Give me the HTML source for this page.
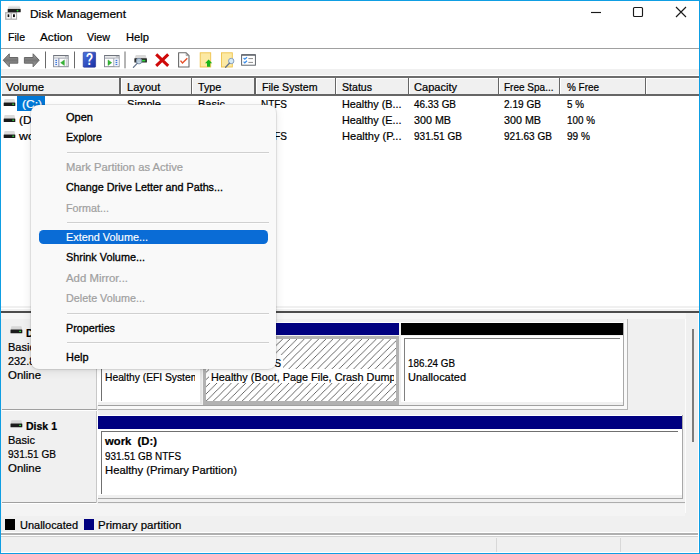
<!DOCTYPE html>
<html lang="en">
<head>
<meta charset="utf-8">
<title>Disk Management</title>
<style>
html,body{margin:0;padding:0;}
body{width:700px;height:554px;overflow:hidden;background:#fff;font-family:"Liberation Sans",sans-serif;font-size:11.6px;color:#000;}
#win{position:absolute;left:0;top:0;width:700px;height:554px;overflow:hidden;background:#fff;}
.a{position:absolute;}
.t{position:absolute;white-space:nowrap;line-height:14px;height:14px;transform-origin:0 50%;display:block;-webkit-text-stroke:0.22px currentColor;}
.b{font-weight:bold;}
.dis{color:#a0a0a0;}
.m{-webkit-text-stroke:0.32px currentColor;}
.hsep{position:absolute;top:78px;width:1.2px;height:16px;background:#666;}
.hsep:after{content:"";position:absolute;left:1.2px;top:0;width:1px;height:16px;background:#fff;}
.msep{position:absolute;left:67px;width:202px;height:1px;background:#d0d0d0;box-shadow:0 1px 0 #fdfdfd;}
svg{position:absolute;overflow:visible;}
</style>
</head>
<body>
<div id="win">
<!-- title bar -->
<div class="a" id="titlebar" style="left:1px;top:1px;width:698px;height:28px;background:#fff;"></div>
<!-- menu bar line -->
<div class="a" style="left:1px;top:48px;width:698px;height:1px;background:#a0a0a0;"></div>
<!-- toolbar bottom gap -->
<div class="a" style="left:1px;top:69px;width:698px;height:8px;background:#f0f0f0;"></div>
<div class="a" style="left:1px;top:75px;width:698px;height:1px;background:#fff;"></div>
<!-- list header -->
<div class="a" style="left:1px;top:76px;width:698px;height:2px;background:#6d6d6d;"></div>
<div class="a" style="left:2px;top:78px;width:697px;height:16px;background:#f0f0f0;"></div>
<div class="a" style="left:2px;top:78.2px;width:697px;height:1px;background:#fff;"></div>
<div class="a" style="left:2px;top:94.4px;width:697px;height:1.5px;background:#666;"></div>
<div class="hsep" style="left:119.4px"></div>
<div class="hsep" style="left:190.8px"></div>
<div class="hsep" style="left:254.4px"></div>
<div class="hsep" style="left:335.1px"></div>
<div class="hsep" style="left:407.7px"></div>
<div class="hsep" style="left:497.6px"></div>
<div class="hsep" style="left:559.0px"></div>
<div class="hsep" style="left:644.5px"></div>
<!-- selection -->
<div class="a" style="left:17px;top:95.8px;width:28px;height:15.4px;background:#0078d7;"></div>
<!-- splitter -->
<div class="a" style="left:1px;top:306px;width:698px;height:6px;background:#f0f0f0;"></div>
<div class="a" style="left:1px;top:308px;width:698px;height:1px;background:#fff;"></div>
<div class="a" style="left:1px;top:311.3px;width:698px;height:1.5px;background:#4c4c4c;"></div>
<!-- lower pane -->
<div class="a" id="lower" style="left:1px;top:313px;width:698px;height:239px;background:#f0f0f0;"></div>
<!-- ===== lower pane graphics ===== -->
<div class="a" style="left:685px;top:313px;width:1px;height:200px;background:#fcfcfc;"></div>
<div class="a" style="left:692.4px;top:329px;width:1.8px;height:113px;background:#7c7c7c;"></div>
<div class="a" style="left:1px;top:313px;width:685px;height:6px;background:#f6f6f6;"></div>
<!-- disk 0 label panel -->
<div class="a" style="left:2px;top:409px;width:95px;height:1px;background:#a0a0a0;"></div>
<div class="a" style="left:2px;top:410px;width:95px;height:1px;background:#fff;"></div>
<div class="a" style="left:96px;top:313px;width:1px;height:96px;background:#c8c8c8;"></div>
<div class="a" style="left:97px;top:313px;width:1px;height:92px;background:#fff;"></div>
<!-- disk 0 frame lines -->
<div class="a" style="left:98px;top:405.2px;width:526px;height:1px;background:#a0a0a0;"></div>
<div class="a" style="left:98px;top:409px;width:530px;height:1px;background:#b4b4b4;"></div>
<div class="a" style="left:623px;top:323px;width:1px;height:83px;background:#a8a8a8;"></div>
<div class="a" style="left:627px;top:319px;width:1px;height:91px;background:#b4b4b4;"></div>
<div class="a" style="left:98px;top:322px;width:525px;height:1px;background:#fff;"></div>
<div class="a" style="left:624px;top:320px;width:3px;height:89px;background:#f9f9f9;"></div>
<div class="a" style="left:98px;top:406px;width:529px;height:3px;background:#f9f9f9;"></div>
<!-- disk 0 bars -->
<div class="a" style="left:98px;top:323.2px;width:101px;height:12.3px;background:#000080;"></div>
<div class="a" style="left:202px;top:323.2px;width:196.5px;height:12.3px;background:#000080;"></div>
<div class="a" style="left:401px;top:323.2px;width:221.5px;height:12.3px;background:#000;"></div>
<!-- EFI box -->
<div class="a" style="left:98px;top:335.5px;width:101.7px;height:66.5px;background:#fff;"></div>
<div class="a" style="left:100.7px;top:338.3px;width:96.5px;height:1px;background:#707070;"></div>
<div class="a" style="left:100.7px;top:338.3px;width:1px;height:62.5px;background:#707070;"></div>
<div class="a" style="left:199.7px;top:336px;width:2.6px;height:68px;background:#e6e6e6;"></div>
<!-- hatched box -->
<div class="a" style="left:202.5px;top:335.5px;width:196.5px;height:69px;background:#b2b2b2;"></div>
<svg style="left:206px;top:338.5px;" width="189.5" height="62.5" viewBox="0 0 189.5 62.5">
<defs><pattern id="hatch" width="7.2" height="7.2" patternUnits="userSpaceOnUse" x="4.65" y="0">
<rect width="7.2" height="7.2" fill="#fff"/>
<path d="M-1,8.2 L8.2,-1 M-1,1 L1,-1 M6.2,8.2 L8.2,6.2" stroke="#585858" stroke-width="0.9" fill="none"/>
</pattern></defs>
<rect width="190" height="62" fill="url(#hatch)"/>
</svg>
<div class="a" style="left:209px;top:355px;width:74px;height:14px;background:#fff;"></div>
<div class="a" style="left:209px;top:369px;width:187px;height:14px;background:#fff;"></div>
<!-- unallocated box -->
<div class="a" style="left:401px;top:335.5px;width:221.5px;height:66.8px;background:#fff;"></div>
<div class="a" style="left:404px;top:338.3px;width:215.5px;height:1px;background:#808080;"></div>
<div class="a" style="left:404px;top:338.3px;width:1px;height:62.7px;background:#808080;"></div>
<!-- disk 1 label panel -->
<div class="a" style="left:2px;top:502px;width:95px;height:1px;background:#a0a0a0;"></div>
<div class="a" style="left:2px;top:503px;width:95px;height:1px;background:#fff;"></div>
<div class="a" style="left:96px;top:411px;width:1px;height:92px;background:#c8c8c8;"></div>
<div class="a" style="left:97px;top:411px;width:1px;height:88px;background:#fff;"></div>
<!-- disk 1 frame -->
<div class="a" style="left:98px;top:415px;width:584px;height:1px;background:#fff;"></div>
<div class="a" style="left:98px;top:498px;width:585px;height:1px;background:#a8a8a8;"></div>
<div class="a" style="left:98px;top:501.5px;width:587px;height:1.3px;background:#adadad;"></div>
<div class="a" style="left:682px;top:415px;width:1px;height:84px;background:#a8a8a8;"></div>
<div class="a" style="left:98px;top:416px;width:583.5px;height:12.5px;background:#000080;"></div>
<div class="a" style="left:98px;top:428.5px;width:583.5px;height:66.3px;background:#fff;"></div>
<div class="a" style="left:100.7px;top:431.2px;width:577.5px;height:1px;background:#707070;"></div>
<div class="a" style="left:100.7px;top:431.2px;width:1px;height:62.8px;background:#707070;"></div>
<!-- legend -->
<div class="a" style="left:2px;top:503.5px;width:683px;height:12.5px;background:#f4f4f4;"></div>
<div class="a" style="left:5.4px;top:519.2px;width:9.6px;height:11px;background:#000;"></div>
<div class="a" style="left:84px;top:519.2px;width:10px;height:11px;background:#000080;"></div>
<!-- status bar -->
<div class="a" style="left:1px;top:532px;width:698px;height:1px;background:#fff;"></div>
<div class="a" style="left:1px;top:533px;width:698px;height:2px;background:#b0b0b0;"></div>
<div class="a" style="left:1px;top:535px;width:698px;height:1px;background:#fff;"></div>
<div class="a" style="left:1px;top:536px;width:698px;height:1px;background:#d2d2d2;"></div>
<div class="a" style="left:1px;top:552px;width:698px;height:1px;background:#fff;"></div>
<div class="a" style="left:698px;top:313px;width:1px;height:240px;background:#fff;"></div>
<div class="a" style="left:496px;top:538px;width:1px;height:14px;background:#d8d8d8;"></div>
<div class="a" style="left:620px;top:538px;width:1px;height:14px;background:#d8d8d8;"></div>
<!-- ===== title icon ===== -->
<svg style="left:4px;top:4px;" width="18" height="18" viewBox="4 4 18 18">
<defs>
<linearGradient id="gtop" x1="0" y1="0" x2="0" y2="1"><stop offset="0" stop-color="#f4f4f4"/><stop offset="1" stop-color="#c4c4c4"/></linearGradient>
<linearGradient id="garr" x1="0" y1="0" x2="0" y2="1"><stop offset="0" stop-color="#a4a4a4"/><stop offset="0.5" stop-color="#757575"/><stop offset="1" stop-color="#a8a8a8"/></linearGradient>
<linearGradient id="ghelp" x1="0" y1="0" x2="1" y2="1"><stop offset="0" stop-color="#4a74e0"/><stop offset="1" stop-color="#1a2fa4"/></linearGradient>
</defs>
<rect x="5.1" y="12.1" width="12" height="7.7" fill="#adadad"/>
<rect x="6.4" y="13.4" width="4.2" height="5.2" fill="#fff"/><rect x="11.8" y="13.4" width="4.2" height="5.2" fill="#fff"/>
<rect x="7.6" y="14.3" width="1.7" height="2.8" fill="#111"/><rect x="13" y="14.3" width="1.9" height="2.8" fill="#111"/>
<path d="M8.6,5.6 H19.6 L20.6,9.1 H7.8 Z" fill="url(#gtop)"/>
<rect x="7.7" y="8.9" width="13" height="3.4" rx="0.6" fill="#1c1c1c"/>
<circle cx="17.5" cy="10.6" r="0.9" fill="#2fd03a"/>
</svg>
<!-- ===== window buttons ===== -->
<svg style="left:585px;top:3px;" width="110" height="20" viewBox="585 3 110 20" fill="none" stroke="#1a1a1a" stroke-width="1.15">
<path d="M591,12.5 H601"/>
<rect x="633.5" y="7.5" width="9" height="9" rx="1"/>
<path d="M676,7 L686,17 M686,7 L676,17"/>
</svg>
<!-- ===== toolbar ===== -->
<svg style="left:0;top:49px;" width="270" height="20" viewBox="0 49 270 20">
<!-- back / forward -->
<path d="M3.2,60.2 L9.3,53.8 V57.5 H17.8 V63.2 H9.3 V66.8 Z" fill="url(#garr)" stroke="#5e5e5e" stroke-width="0.9" stroke-linejoin="round"/>
<path d="M39.2,60.2 L33.1,53.8 V57.5 H24.4 V63.2 H33.1 V66.8 Z" fill="url(#garr)" stroke="#5e5e5e" stroke-width="0.9" stroke-linejoin="round"/>
<path d="M45.5,51.5 V68.3 M74.5,51.5 V68.3 M125,51.5 V68.3" stroke="#6a6a6a" stroke-width="1"/>
<!-- console tree icon -->
<rect x="53.6" y="55.5" width="14.6" height="11.2" fill="#fff" stroke="#868a94" stroke-width="1"/>
<path d="M53.6,55.6 H68.2" stroke="#6f737c" stroke-width="1.1"/>
<path d="M54,58.1 H67.8" stroke="#8a8f9c" stroke-width="0.9"/>
<path d="M65,56.8 h0.8 M66.4,56.8 h0.8" stroke="#7a7f8a" stroke-width="0.8"/>
<path d="M58.8,58.4 V66.4" stroke="#4a5a8a" stroke-width="0.9"/>
<rect x="54.2" y="58.6" width="4.1" height="7.6" fill="#eef2fa"/>
<path d="M55.4,60.4 h1.6 M55.4,62.4 h1.6 M55.4,64.4 h1.6" stroke="#2a6ad8" stroke-width="1"/>
<path d="M64.4,59.9 V65.5 L60.6,62.7 Z" fill="#35b535" stroke="#2a9a2a" stroke-width="0.4"/>
<path d="M66.3,59.2 V66" stroke="#b4b8c2" stroke-width="0.8"/>
<!-- help -->
<rect x="83.2" y="52.2" width="12.4" height="15" rx="0.8" fill="url(#ghelp)" stroke="#1c2c90" stroke-width="0.6"/>
<text x="0" y="0" transform="translate(89.4,65.2) scale(0.76,1)" font-family="Liberation Sans, sans-serif" font-weight="bold" font-size="16" fill="#fff" text-anchor="middle">?</text>
<!-- action pane icon -->
<rect x="104.5" y="55.5" width="14.6" height="11.2" fill="#fff" stroke="#868a94" stroke-width="1"/>
<path d="M104.5,55.6 H119.1" stroke="#6f737c" stroke-width="1.1"/>
<path d="M104.9,58.1 H118.7" stroke="#8a8f9c" stroke-width="0.9"/>
<path d="M115.9,56.8 h0.8 M117.3,56.8 h0.8" stroke="#7a7f8a" stroke-width="0.8"/>
<path d="M113.9,58.4 V66.4" stroke="#8a8f9c" stroke-width="0.9"/>
<rect x="114.5" y="58.6" width="4.1" height="7.6" fill="#eef2fa"/>
<path d="M115.6,60.4 h1.7 M115.6,62.4 h1.7 M115.6,64.4 h1.7" stroke="#2a6ad8" stroke-width="1"/>
<path d="M108,59.9 V65.5 L111.8,62.7 Z" fill="#35b535" stroke="#2a9a2a" stroke-width="0.4"/>
<!-- disk search icon -->
<path d="M135.8,54.9 H145.6 L146.8,58.4 H134.5 Z" fill="#d9d9d9"/>
<rect x="134.4" y="58.2" width="12.5" height="4.2" rx="0.5" fill="#222"/>
<rect x="142" y="59.8" width="3.4" height="1.7" fill="#2fd03a"/>
<circle cx="139" cy="61.1" r="2.8" fill="#cfe6f7" fill-opacity="0.85" stroke="#7d8fa8" stroke-width="1"/>
<path d="M137.2,63.4 L133.4,67.4" stroke="#66758c" stroke-width="1.3" stroke-linecap="round"/>
<!-- red X -->
<path d="M156.2,54.4 L168.2,65.8 M168.2,54.4 L156.2,65.8" stroke="#cf0a0a" stroke-width="3" stroke-linecap="butt"/>
<!-- doc check -->
<path d="M178.6,52.8 H186.2 L189,55.6 V67 H178.6 Z" fill="#fff" stroke="#6a6a6a" stroke-width="1.1" stroke-linejoin="round"/>
<path d="M186.2,52.8 V55.6 H189" fill="none" stroke="#8e8e8e" stroke-width="0.8"/>
<path d="M180.5,60.6 L182.5,63 L187.3,58.2" fill="none" stroke="#e6502a" stroke-width="1.4"/>
<!-- folder up -->
<rect x="200.2" y="52.8" width="10.5" height="14.2" fill="#fce9a4" stroke="#eec24a" stroke-width="0.9"/>
<path d="M208.6,59.6 L212.2,63.2 H210.2 V66.8 H207 V63.2 H205 Z" fill="#18b418"/>
<!-- folder search -->
<rect x="221.5" y="52.8" width="10.8" height="14.2" fill="#fce9a4" stroke="#eec24a" stroke-width="0.9"/>
<circle cx="231.2" cy="61" r="2.7" fill="#d6ebf8" stroke="#8aa0bc" stroke-width="1"/>
<path d="M229.4,63.2 L225.6,67.2" stroke="#66758c" stroke-width="1.3" stroke-linecap="round"/>
<!-- list icon -->
<rect x="241.6" y="54.8" width="13.8" height="10.4" fill="#fff" stroke="#5a5f66" stroke-width="0.95"/>
<path d="M241.6,55 H255.4" stroke="#5a5f66" stroke-width="1.3"/>
<path d="M243.6,58 L244.8,59.2 L247,57.2 M243.6,61.6 L244.8,62.8 L247,60.8" fill="none" stroke="#3b8eea" stroke-width="1.2"/>
<path d="M248.4,58.6 H253 M248.4,62.4 H253" stroke="#8c8c8c" stroke-width="1"/>
</svg>
<!-- ===== volume icons in list ===== -->
<svg style="left:3px;top:98px;" width="14" height="44" viewBox="3 98 14 44">
<g id="vol">
<path d="M4.6,99 H14.4 L15.2,102.6 H3.8 Z" fill="#dcdcdc"/>
<rect x="3.7" y="102.4" width="11.6" height="3.7" rx="0.5" fill="#1a1a1a"/>
<rect x="12.3" y="103.6" width="1.8" height="1.2" fill="#35e040"/>
</g>
<use href="#vol" y="16"/><use href="#vol" y="32"/>
</svg>
<!-- lower pane disk icons -->
<svg style="left:10px;top:325px;" width="14" height="10" viewBox="10 325 14 10">
<g id="dsk">
<path d="M11.4,326.3 H21.4 L22.2,329.8 H10.6 Z" fill="#d6d6d6"/>
<rect x="10.5" y="329.6" width="11.8" height="3.7" rx="0.5" fill="#1a1a1a"/>
<rect x="19.2" y="330.8" width="1.8" height="1.2" fill="#35e040"/>
</g>
</svg>
<svg style="left:10px;top:418.6px;" width="14" height="10" viewBox="10 325 14 10"><use href="#dsk"/></svg>

<span class="t" style="left:30px;top:7.17px;transform:scaleX(1.0274);">Disk Management</span>
<span class="t" style="left:8px;top:30.17px;transform:scaleX(0.9097);">File</span>
<span class="t" style="left:39.5px;top:30.17px;transform:scaleX(1.0082);">Action</span>
<span class="t" style="left:87px;top:30.17px;transform:scaleX(0.9229);">View</span>
<span class="t" style="left:125.5px;top:30.17px;transform:scaleX(0.9640);">Help</span>
<span class="t" style="left:6px;top:80.17px;transform:scaleX(0.9826);">Volume</span>
<span class="t" style="left:126.8px;top:80.17px;transform:scaleX(0.9566);">Layout</span>
<span class="t" style="left:197.7px;top:80.17px;transform:scaleX(0.9268);">Type</span>
<span class="t" style="left:261.5px;top:80.17px;transform:scaleX(0.9164);">File System</span>
<span class="t" style="left:342px;top:80.17px;transform:scaleX(0.9125);">Status</span>
<span class="t" style="left:414px;top:80.17px;transform:scaleX(0.9532);">Capacity</span>
<span class="t" style="left:504px;top:80.17px;transform:scaleX(0.8630);">Free Spa...</span>
<span class="t" style="left:567px;top:80.17px;transform:scaleX(0.8562);">% Free</span>
<span class="t" style="left:21.5px;top:97.17px;transform:scaleX(1.0348);color:#fff;">(C:)</span>
<span class="t" style="left:19px;top:113.17px;transform:scaleX(1.0348);">(D:)</span>
<span class="t" style="left:19px;top:129.17px;transform:scaleX(1.0635);">work (D:)</span>
<span class="t" style="left:127px;top:97.17px;transform:scaleX(0.9590);">Simple</span>
<span class="t" style="left:198px;top:97.17px;transform:scaleX(0.9521);">Basic</span>
<span class="t" style="left:261px;top:97.17px;transform:scaleX(0.8586);">NTFS</span>
<span class="t" style="left:261px;top:129.17px;transform:scaleX(0.8586);">NTFS</span>
<span class="t" style="left:342px;top:97.17px;transform:scaleX(0.9326);">Healthy (B...</span>
<span class="t" style="left:342px;top:113.17px;transform:scaleX(0.9326);">Healthy (E...</span>
<span class="t" style="left:342px;top:129.17px;transform:scaleX(0.9551);">Healthy (P...</span>
<span class="t" style="left:414px;top:97.17px;transform:scaleX(0.8571);">46.33 GB</span>
<span class="t" style="left:414px;top:113.17px;transform:scaleX(0.9257);">300 MB</span>
<span class="t" style="left:414px;top:129.17px;transform:scaleX(0.8658);">931.51 GB</span>
<span class="t" style="left:504px;top:97.17px;transform:scaleX(0.8696);">2.19 GB</span>
<span class="t" style="left:504px;top:113.17px;transform:scaleX(0.9257);">300 MB</span>
<span class="t" style="left:504px;top:129.17px;transform:scaleX(0.8658);">921.63 GB</span>
<span class="t" style="left:567px;top:97.17px;transform:scaleX(0.8507);">5 %</span>
<span class="t" style="left:567px;top:113.17px;transform:scaleX(0.8517);">100 %</span>
<span class="t" style="left:567px;top:129.17px;transform:scaleX(0.8700);">99 %</span>
<span class="t b" style="left:26px;top:325.67px;transform:scaleX(0.9072);">Disk 0</span>
<span class="t" style="left:8px;top:340.17px;transform:scaleX(0.9521);">Basic</span>
<span class="t" style="left:8px;top:354.17px;transform:scaleX(0.9380);">232.88 GB</span>
<span class="t" style="left:8px;top:368.17px;transform:scaleX(0.9846);">Online</span>
<div class="a" style="left:105.3px;top:370.17px;width:89.3px;height:14px;overflow:hidden;"><span class="t" style="left:0;top:0;transform:scaleX(0.8866);">Healthy (EFI System Partition)</span></div>
<div class="a" style="left:211px;top:370.17px;width:182.5px;height:14px;overflow:hidden;"><span class="t" style="left:0;top:0;transform:scaleX(0.9359);">Healthy (Boot, Page File, Crash Dump, Primary Partition)</span></div>
<span class="t" style="left:211px;top:356.17px;transform:scaleX(0.8486);">46.33 GB NTFS</span>
<span class="t" style="left:408px;top:356.17px;transform:scaleX(0.8478);">186.24 GB</span>
<span class="t" style="left:408px;top:370.17px;transform:scaleX(0.9472);">Unallocated</span>
<span class="t b" style="left:26px;top:418.67px;transform:scaleX(0.9072);">Disk 1</span>
<span class="t" style="left:8px;top:433.17px;transform:scaleX(0.9521);">Basic</span>
<span class="t" style="left:8px;top:447.17px;transform:scaleX(0.8658);">931.51 GB</span>
<span class="t" style="left:8px;top:461.17px;transform:scaleX(0.9846);">Online</span>
<span class="t b" style="left:105px;top:434.17px;transform:scaleX(0.9725);">work&nbsp; (D:)</span>
<span class="t" style="left:105px;top:448.67px;transform:scaleX(0.8545);">931.51 GB NTFS</span>
<span class="t" style="left:105px;top:463.17px;transform:scaleX(0.9709);">Healthy (Primary Partition)</span>
<span class="t" style="left:19.8px;top:518.17px;transform:scaleX(0.9472);">Unallocated</span>
<span class="t" style="left:98.4px;top:518.17px;transform:scaleX(0.9893);">Primary partition</span>
<!-- context menu -->
<div class="a" id="ctx" style="left:30.5px;top:105px;width:245.8px;height:263.5px;background:#f9f9f9;border-radius:8px;box-shadow:0 2px 10px rgba(0,0,0,0.10),0 1px 3px rgba(0,0,0,0.06),0 0 0 1px rgba(0,0,0,0.07);"></div>
<div class="msep" style="top:152px"></div>
<div class="msep" style="top:222px"></div>
<div class="msep" style="top:313px"></div>
<div class="msep" style="top:342px"></div>
<div class="a" style="left:39px;top:230.4px;width:229px;height:13.4px;border-radius:4.5px;background:#0a6cd6;"></div>
<span class="t m" style="left:66px;top:110.17px;transform:scaleX(0.9515);">Open</span>
<span class="t m" style="left:66px;top:130.17px;transform:scaleX(0.9157);">Explore</span>
<span class="t dis" style="left:66px;top:159.67px;transform:scaleX(0.9658);">Mark Partition as Active</span>
<span class="t m" style="left:66px;top:180.17px;transform:scaleX(0.9298);">Change Drive Letter and Paths...</span>
<span class="t dis" style="left:66px;top:200.67px;transform:scaleX(0.9269);">Format...</span>
<span class="t m" style="left:66px;top:229.67px;transform:scaleX(0.9355);color:#fff;-webkit-text-stroke:0.15px #fff;">Extend Volume...</span>
<span class="t m" style="left:66px;top:250.17px;transform:scaleX(0.9358);">Shrink Volume...</span>
<span class="t dis" style="left:66px;top:270.67px;transform:scaleX(0.9819);">Add Mirror...</span>
<span class="t dis" style="left:66px;top:291.17px;transform:scaleX(0.9286);">Delete Volume...</span>
<span class="t m" style="left:66px;top:320.67px;transform:scaleX(0.9273);">Properties</span>
<span class="t m" style="left:66px;top:350.17px;transform:scaleX(0.9430);">Help</span>
<!-- window border -->
<div class="a" style="left:0;top:0;width:698px;height:552px;border:1px solid #0f9ee3;pointer-events:none;"></div>
</div>
</body>
</html>
